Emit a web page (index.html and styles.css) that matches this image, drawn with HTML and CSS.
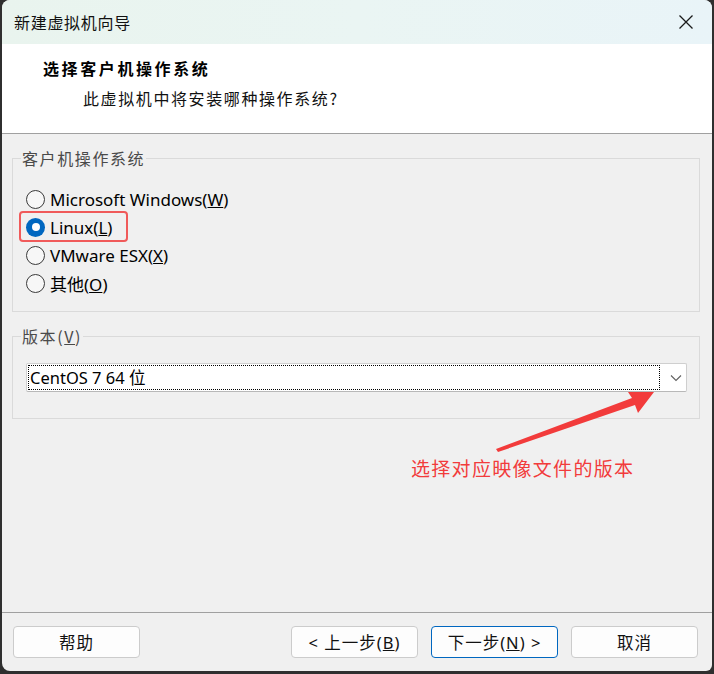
FILE: index.html
```html
<!DOCTYPE html>
<html lang="zh-CN">
<head>
<meta charset="utf-8">
<title>新建虚拟机向导</title>
<link rel="stylesheet" href="styles.css">
</head>
<body>
<div class="window">
  <div class="titlebar">
    <span class="title">新建虚拟机向导</span>
    <svg class="close" width="16" height="16" viewBox="0 0 16 16"><path d="M1.5 1.5 L14.5 14.5 M14.5 1.5 L1.5 14.5" stroke="#1a1a1a" stroke-width="1.3" fill="none"/></svg>
  </div>
  <div class="header">
    <div class="h-title">选择客户机操作系统</div>
    <div class="h-sub">此虚拟机中将安装哪种操作系统?</div>
  </div>
  <div class="content">
    <fieldset class="group group-os">
      <legend>客户机操作系统</legend>
      <div class="radios">
        <label class="radio"><span class="dot"></span><span class="rtext">Microsoft Windows(<u>W</u>)</span></label>
        <label class="radio highlight"><span class="dot checked"></span><span class="rtext">Linux(<u>L</u>)</span></label>
        <label class="radio"><span class="dot"></span><span class="rtext">VMware ESX(<u>X</u>)</span></label>
        <label class="radio"><span class="dot"></span><span class="rtext">其他(<u>O</u>)</span></label>
      </div>
    </fieldset>
    <fieldset class="group group-ver">
      <legend>版本(<u>V</u>)</legend>
      <div class="combo-wrap">
        <div class="combo">
          <div class="combo-value">CentOS 7 64 位</div>
          <svg class="chev" width="12" height="8" viewBox="0 0 12 8"><path d="M1 1.5 L6 6.5 L11 1.5" stroke="#606060" stroke-width="1.1" fill="none"/></svg>
        </div>
      </div>
    </fieldset>
  </div>
  <div class="footer">
    <button class="btn">帮助</button>
    <div class="spacer"></div>
    <button class="btn">&lt; 上一步(<u>B</u>)</button>
    <button class="btn primary">下一步(<u>N</u>) &gt;</button>
    <button class="btn">取消</button>
  </div>
  <svg class="arrow" width="714" height="674" viewBox="0 0 714 674"><polygon points="496,449 632,398 628,392 654,392 638,413 635,405 498,452" fill="#f23b3b"/></svg>
  <div class="note">选择对应映像文件的版本</div>
</div>
</body>
</html>
```
FILE: styles.css
```css
* { box-sizing: border-box; }
html, body { margin: 0; padding: 0; }
body {
  background: #2f2f2f;
  width: 714px;
  height: 674px;
  overflow: hidden;
  font-family: "Noto Sans", "Noto Sans CJK SC", sans-serif;
  color: #000;
}
.window {
  position: relative;
  margin-left: 2px;
  width: 710px;
  height: 671px;
  background: #f0f0f0;
  border-radius: 8px 8px 6px 8px;
  overflow: hidden;
  display: flex;
  flex-direction: column;
}
.titlebar {
  height: 44px;
  flex: none;
  display: flex;
  align-items: center;
  justify-content: space-between;
  padding: 0 18px 0 12px;
  background: linear-gradient(90deg, #e9f4ee 0%, #eaf5f3 50%, #e9f4f8 100%);
}
.title {
  font-family: "Noto Sans CJK SC", sans-serif;
  font-size: 16px;
  letter-spacing: 0.7px;
  color: #111;
}
.close { display: block; }
.header {
  height: 90px;
  flex: none;
  background: #fff;
  border-bottom: 1px solid #a0a0a0;
  padding: 11px 0 0 41px;
  font-family: "Noto Sans CJK SC", sans-serif;
}
.h-title {
  font-size: 16px;
  font-weight: bold;
  letter-spacing: 2.6px;
  line-height: 26px;
}
.h-sub {
  margin: 4px 0 0 40px;
  font-size: 16px;
  letter-spacing: 1.6px;
  line-height: 26px;
  color: #111;
}
.content {
  padding: 0 12px 0 10px;
  flex: none;
}
.group {
  margin: 0;
  padding: 0;
  border: 1px solid #dadada;
  min-width: 0;
}
.group legend {
  margin-left: 8px;
  padding: 0 1px;
  font-family: "Noto Sans CJK SC", sans-serif;
  font-size: 16px;
  letter-spacing: 1.6px;
  line-height: 22px;
  color: #4a4a4a;
}
.group-os { margin-top: 13px; height: 165px; }
.radios {
  padding: 16px 0 0 13px;
  display: flex;
  flex-direction: column;
}
.radio {
  position: relative;
  height: 28px;
  display: flex;
  align-items: center;
  font-size: 17px;
  align-self: flex-start;
}
.rtext { margin-left: 5px; letter-spacing: 0; }
.dot {
  width: 19px;
  height: 19px;
  border-radius: 50%;
  border: 1px solid #3a3a3a;
  background: #f7f7f7;
  display: block;
  flex: none;
}
.dot.checked {
  border: none;
  background: #0067c0;
  position: relative;
}
.dot.checked::after {
  content: "";
  position: absolute;
  left: 5.5px;
  top: 5.5px;
  width: 8px;
  height: 8px;
  border-radius: 50%;
  background: #fff;
}
.highlight::after {
  content: "";
  position: absolute;
  left: -7px;
  top: -2px;
  right: -16px;
  bottom: -1px;
  border: 2px solid #f05a5a;
  border-radius: 4px;
}
.group-ver { margin-top: 13px; height: 94px; }
.combo-wrap { padding: 16px 12px 0 13px; }
.combo {
  height: 29px;
  background: #fff;
  border: 1px solid #cfcfcf;
  border-bottom-color: #b8b8b8;
  border-radius: 2px;
  display: flex;
  align-items: center;
  padding: 1px 0 1px 1px;
}
.combo-value {
  width: 632px;
  height: 25px;
  border: 1px dotted #000;
  font-size: 16.5px;
  line-height: 23px;
  padding-left: 1px;
  font-family: "Noto Sans", "Noto Sans CJK SC", sans-serif;
}
.chev { margin-left: 10px; }
.footer {
  margin-top: auto;
  border-top: 1px solid #a0a0a0;
  height: 59px;
  padding: 13px 14px 0 11px;
  display: flex;
  gap: 13px;
  align-items: flex-start;
}
.spacer { flex: 1; }
.btn {
  width: 127px;
  height: 32px;
  background: #fdfdfd;
  border: 1px solid #cccccc;
  border-radius: 4px;
  font-family: "Noto Sans", "Noto Sans CJK SC", sans-serif;
  font-size: 16.5px;
  color: #111;
  letter-spacing: 1px;
  padding: 0;
}
.btn.primary { border-color: #0067c0; }
.arrow {
  position: absolute;
  left: -2px;
  top: 0;
  pointer-events: none;
}
.note {
  position: absolute;
  left: 409px;
  top: 455px;
  font-family: "Noto Sans CJK SC", sans-serif;
  font-size: 19px;
  letter-spacing: 1.3px;
  line-height: 26px;
  color: #f23b3b;
}
```
